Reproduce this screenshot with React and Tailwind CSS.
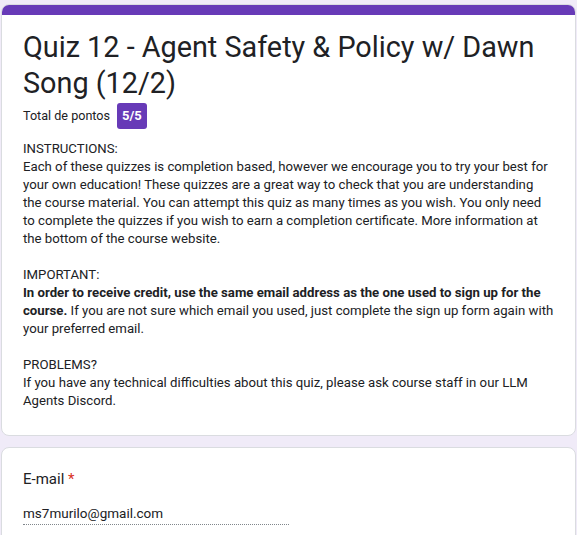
export default function App() {
  return (
    <div
      className="min-h-screen bg-[#f0ebf8] pt-1 px-px text-[#202124]"
      style={{ fontFamily: "Roboto, 'Liberation Sans', sans-serif" }}
    >
      <div className="rounded-lg bg-white border border-[#dadce0] overflow-hidden">
        <div className="h-[10px] bg-[#673ab7]" />
        <div className="px-[21px] pt-[14px] pb-[25px]">
          <h1 className="text-[28.8px] leading-[36px] font-normal">
            Quiz 12 - Agent Safety &amp; Policy w/ Dawn Song (12/2)
          </h1>
          <div className="flex items-center gap-[7px] mt-[2px] text-[12.6px]">
            <span>Total de pontos</span>
            <span className="bg-[#673ab7] text-white font-bold rounded-[3px] px-[5px] h-[26px] flex items-center text-[13px]">
              5/5
            </span>
          </div>
          <div className="mt-[11px] max-w-[531px] text-[13.2px] leading-[18px]">
            <p>INSTRUCTIONS:</p>
            <p>
              Each of these quizzes is completion based, however we encourage you to try your best for your own
              education! These quizzes are a great way to check that you are understanding the course material. You
              can attempt this quiz as many times as you wish. You only need to complete the quizzes if you wish to
              earn a completion certificate. More information at the bottom of the course website.
            </p>
            <p className="mt-[18px]">IMPORTANT:</p>
            <p>
              <b>In order to receive credit, use the same email address as the one used to sign up for the course.</b>{" "}
              If you are not sure which email you used, just complete the sign up form again with your preferred
              email.
            </p>
            <p className="mt-[18px]">PROBLEMS?</p>
            <p>
              If you have any technical difficulties about this quiz, please ask course staff in our LLM Agents
              Discord.
            </p>
          </div>
        </div>
      </div>
      <div className="mt-[11px] rounded-lg bg-white border border-[#dadce0] px-[21px] pt-[20px] pb-6">
        <div className="text-[15px] leading-[22px]">
          E-mail <span className="text-[#d93025]">*</span>
        </div>
        <div className="mt-[13px] w-[266px] text-[13.5px] leading-[20px] pb-px border-b border-dotted border-[#80868b]">
          ms7murilo@gmail.com
        </div>
      </div>
    </div>
  );
}
